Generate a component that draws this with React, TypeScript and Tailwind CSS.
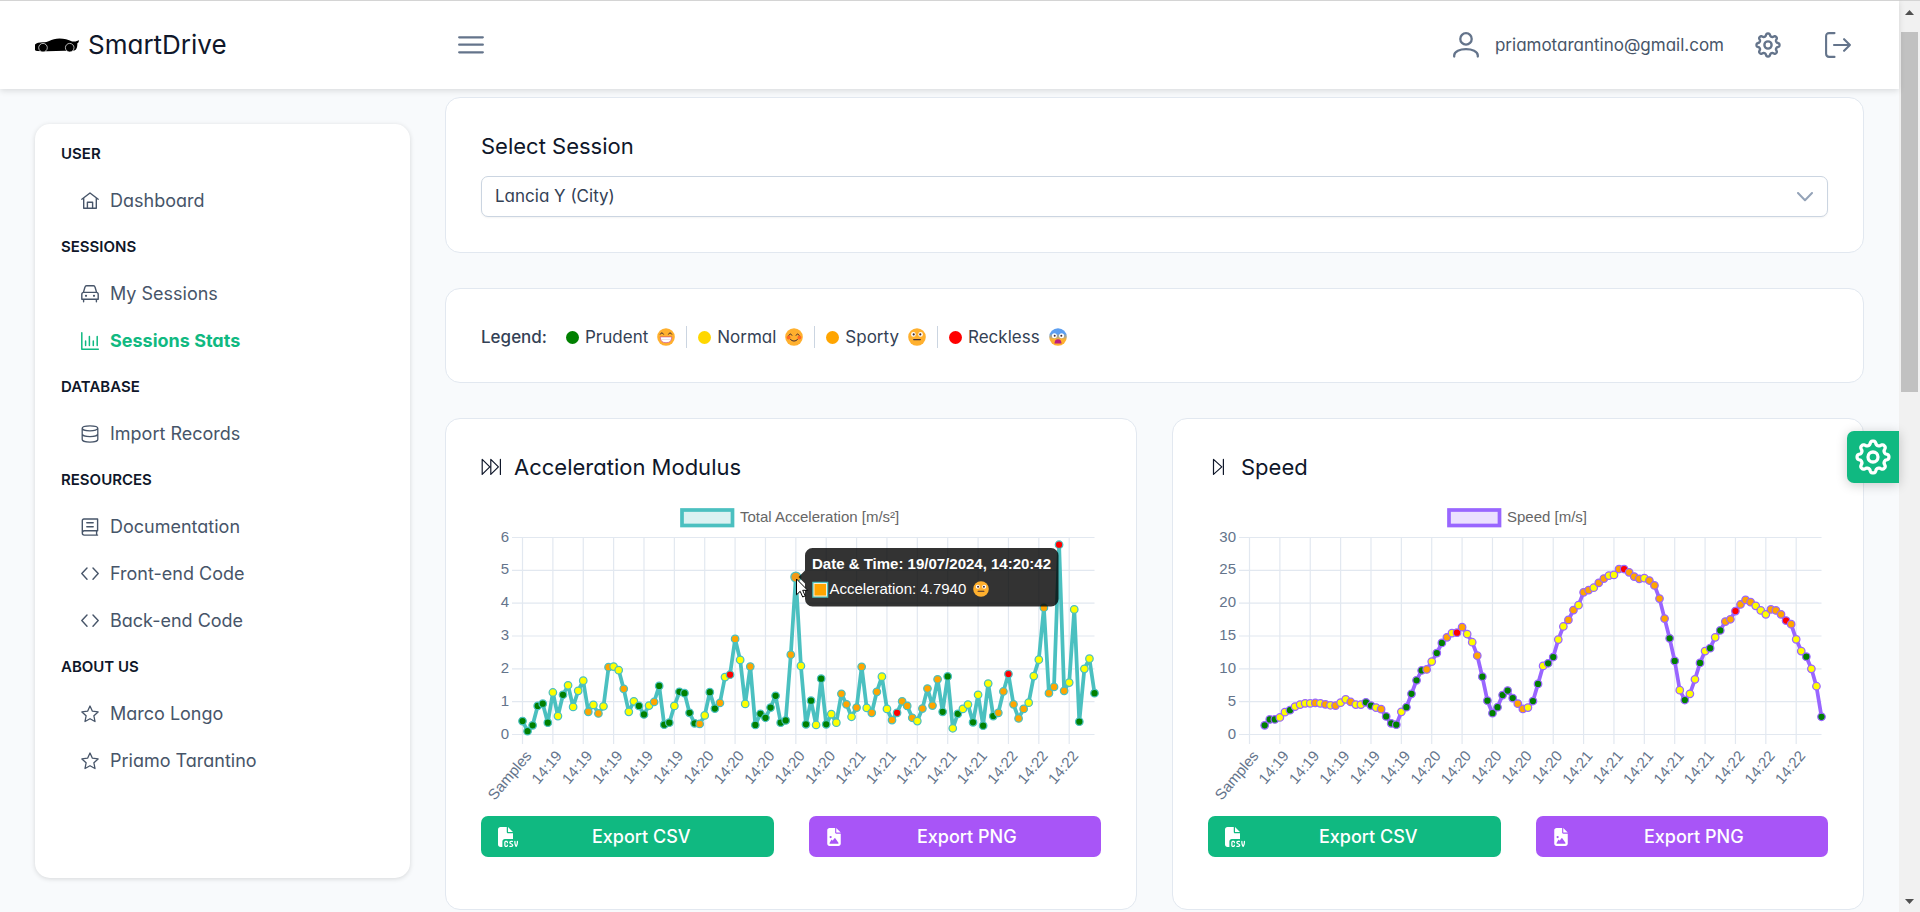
import { useId, type ReactNode } from "react";
import { FaFileCsv, FaFileImage } from "react-icons/fa6";

type Level = "G" | "Y" | "O" | "R";

const pointColor: Record<Level, string> = {
  G: "#008000",
  Y: "#ffff00",
  O: "#ffa500",
  R: "#ff0000",
};

const LEVELS = [
  "GGGGGGYYGY",
  "YYYOYOYOYY",
  "OYYGGYOGGG",
  "YGGGGOYGGO",
  "YROYYOGGGG",
  "GGGOOYGGYG",
  "GYYOOYOOYO",
  "OYYOROOOYO",
  "OOOGGYGYYG",
  "YGYGOOROOO",
  "YYYOOOROYY",
  "GYYG",
].join("");

const ACCELERATION: number[] = [
  0.41, 0.1, 0.28, 0.87, 0.94, 0.36, 1.28, 0.56, 1.21, 1.5, 0.84, 1.33, 1.64, 0.69, 0.9, 0.64, 0.86, 2.05, 2.07, 1.96,
  1.39, 0.69, 1.01, 0.87, 0.61, 0.88, 0.99, 1.48, 0.3, 0.36, 0.87, 1.3, 1.26, 0.66, 0.34, 0.32, 0.58, 1.29, 0.79, 0.96,
  1.75, 1.82, 2.91, 2.27, 0.93, 2.07, 0.29, 0.63, 0.51, 0.82, 1.18, 0.36, 0.43, 2.43, 4.794, 2.09, 0.31, 1.03, 0.29, 1.7,
  0.31, 0.62, 0.36, 1.24, 0.92, 0.54, 0.82, 2.06, 0.81, 0.66, 1.3, 1.76, 0.78, 0.44, 0.66, 1.01, 0.87, 0.51, 0.41, 0.79,
  1.4, 0.88, 1.68, 0.69, 1.77, 0.19, 0.63, 0.78, 0.91, 0.37, 1.21, 0.27, 1.55, 0.56, 0.66, 1.31, 1.84, 0.92, 0.49, 0.78,
  0.97, 1.78, 2.28, 3.86, 1.26, 1.45, 5.78, 1.33, 1.58, 3.81, 0.39, 2.0, 2.31, 1.26,
];

// The first three samples carry no GPS fix, so the speed series starts at index 3.
const SPEED_START = 3;
const SPEED: number[] = [
  1.4, 2.3, 2.3, 2.6, 3.4, 3.7, 4.25, 4.55, 4.75, 4.75, 4.8, 4.75, 4.6, 4.45, 4.4, 4.85, 5.35, 4.95, 4.55, 4.55, 4.9,
  4.4, 4.1, 3.85, 2.75, 1.7, 1.5, 3.45, 4.15, 6.2, 8.25, 9.75, 9.9, 11.1, 12.4, 13.95, 14.8, 15.45, 15.5, 16.35, 15.3,
  14.05, 12, 8.8, 5.15, 3.25, 4.15, 6, 6.7, 5.55, 4.7, 3.9, 4.1, 5.1, 7.7, 10.45, 10.85, 11.8, 14.45, 16.45, 17.45,
  18.95, 19.7, 21.65, 22, 22.35, 23.1, 23.75, 24.2, 24.3, 25.2, 25.2, 24.7, 24.05, 23.7, 23.8, 23.45, 22.7, 20.7, 17.65,
  14.65, 11.2, 6.75, 5.25, 6.2, 8.4, 10.9, 12.7, 13.15, 14.8, 15.85, 17.2, 17.55, 18.8, 19.8, 20.5, 20.15, 19.6, 18.9,
  18.3, 19.05, 18.9, 18.3, 17.35, 16.8, 14.5, 12.7, 11.85, 10, 7.35, 2.7,
];

const TIME_LABELS = [
  "Samples", "14:19", "14:19", "14:19", "14:19", "14:19", "14:20", "14:20", "14:20", "14:20",
  "14:20", "14:21", "14:21", "14:21", "14:21", "14:21", "14:22", "14:22", "14:22",
];

/* ---------- icons ---------- */

function LineIcon({ children, className, width = 1.4 }: { children: ReactNode; className?: string; width?: number }) {
  return (
    <svg
      viewBox="0 0 18 18"
      className={className ?? "size-[18px] shrink-0"}
      fill="none"
      stroke="currentColor"
      strokeWidth={width}
      strokeLinecap="round"
      strokeLinejoin="round"
      aria-hidden="true"
    >
      {children}
    </svg>
  );
}

const HomeIcon = () => (
  <LineIcon>
    <path d="M.8 7.2 9 1l8.2 6.2M2.7 6v10.3h12.6V6M6.4 16.3v-6.1h5.2v6.1" />
  </LineIcon>
);
const CarIcon = () => (
  <LineIcon>
    <path d="M2.4 7.4 4 2q.3-1.200 1.500-1.200h7q1.200 0 1.500 1.200l1.600 5.400M.8 9.4q0-2 2-2h12.400q2 0 2 2v4.800H.8zM2.600 14.200v2.600M15.400 14.200v2.600" />
    <path d="M5 10.800h.01M13 10.800h.01" strokeWidth="2.200" />
  </LineIcon>
);
const ChartBarIcon = () => (
  <LineIcon width={1.5}>
    <path d="M.8.8v16.400h16.500M4.600 9v4.600M8.400 4.400v9.200M12.300 9v4.600M16.200 4.400v9.200" />
  </LineIcon>
);
const DatabaseIcon = () => (
  <LineIcon width={1.3}>
    <path d="M1.200 3.200C1.200 1.800 4.700.8 9 .8s7.800 1 7.800 2.400S13.300 5.800 9 5.800 1.200 4.600 1.200 3.200zM1.200 3.200v11.400c0 1.400 3.500 2.600 7.800 2.600s7.800-1.200 7.800-2.600V3.200M1.200 9c0 1.400 3.500 2.600 7.800 2.600s7.800-1.200 7.800-2.600" />
  </LineIcon>
);
const BookIcon = () => (
  <LineIcon>
    <path d="M16.600 12.800V1H3Q1.300 1 1.300 2.700v12.400q0 2 1.900 2h13.400M16 12.800H3.200q-1.900 0-1.900 2.200M15.600 12.800v4.300M5.800 4.800h6.400M5.800 8.700h6.400" />
  </LineIcon>
);
const CodeIcon = () => (
  <LineIcon>
    <path d="M6 3 .8 8.600 6 14.200M12 3l5.200 5.600-5.200 5.600" />
  </LineIcon>
);
const StarIcon = () => (
  <LineIcon width={1.3}>
    <path d="m9 1 2.400 5.200 5.700.7-4.200 3.900 1.100 5.700L9 13.700l-5 2.800 1.100-5.700L.9 6.900l5.700-.7z" />
  </LineIcon>
);

const gearPath = (() => {
  const points: string[] = [];
  const steps = 192;
  for (let i = 0; i < steps; i++) {
    const a = (i / steps) * Math.PI * 2;
    const r = 7.05 + 0.98 * Math.tanh(1.6 * Math.cos(8 * a));
    points.push(`${(9 + r * Math.sin(a)).toFixed(2)} ${(9 - r * Math.cos(a)).toFixed(2)}`);
  }
  return `M${points.join("L")}Z`;
})();

function CogIcon({ className }: { className: string }) {
  return (
    <LineIcon className={className} width={1.65}>
      <path d={gearPath} />
      <circle cx="9" cy="9" r="2.500" />
    </LineIcon>
  );
}

function CarLogo() {
  return (
    <svg viewBox="0 0 44 15" className="h-[15px] w-11 shrink-0" aria-hidden="true">
      <path
        fill="#000"
        d="M0 6.500C1.500 4.800 4 4.300 8 4.200c2.500 0 4.500-.3 6.200-1.200C17 1.300 20.500.4 24.500.4c4.600 0 8.800 1.200 12.600 3.200l3.400-.2 3.700-1.200-.8 2.200-1.200 1c.4 1.800 0 4.200-1.200 6.200l-1.600 1L12 13.200 1.800 13 0 12.300z"
      />
      <g fill="#000" stroke="#fff" strokeWidth=".7">
        <circle cx="8" cy="9.700" r="4.300" />
        <circle cx="34.700" cy="9.700" r="4.300" />
      </g>
    </svg>
  );
}

const FastForwardIcon = () => (
  <LineIcon className="h-[18px] w-[22px]" width={1.2}>
    <path d="M-.8 1.400v15l7.600-7.500zM7.800 1.400v15l7.600-7.500zM17.400 1.400v15" />
  </LineIcon>
);
const StepForwardIcon = () => (
  <LineIcon className="h-[18px] w-[22px]" width={1.2}>
    <path d="M3.500 1.400v15l8.300-7.500zM13.400 1.400v15" />
  </LineIcon>
);

/* ---------- faces ---------- */

type Mood = "grin" | "smile" | "neutral" | "scared";

function FaceShapes({ mood }: { mood: Mood }) {
  const id = useId();
  return (
    <>
      {mood === "scared" && (
        <defs>
          <linearGradient id={id} x1="0" y1="0" x2="0" y2="1">
            <stop offset=".3" stopColor="#5c9ef0" />
            <stop offset=".65" stopColor="#ffb02e" />
          </linearGradient>
        </defs>
      )}
      <circle cx="9" cy="9" r="8.800" fill={mood === "scared" ? `url(#${id})` : "#ffb02e"} />
      {mood === "grin" && (
        <>
          <path d="M3.300 6.200q1.500-3 3.200 0M11.500 6.200q1.500-3 3.200 0" fill="none" stroke="#402a32" strokeLinecap="round" />
          <path d="M3.200 8.900h11.600q0 5.800-5.800 5.800T3.200 8.900z" fill="#fff" stroke="#bb1d80" strokeWidth=".5" />
          <path d="M4 11.500h10" stroke="#d8c2d0" strokeWidth=".5" />
        </>
      )}
      {mood === "smile" && (
        <>
          <circle cx="3.600" cy="9.500" r="1.900" fill="#ff6723" />
          <circle cx="14.400" cy="9.500" r="1.900" fill="#ff6723" />
          <path
            d="M3.900 7.300q1.500-2.900 3 0M11.100 7.300q1.500-2.900 3 0M5.500 11.500q3.500 3.400 7 0"
            fill="none"
            stroke="#402a32"
            strokeLinecap="round"
          />
        </>
      )}
      {mood === "neutral" && (
        <>
          <circle cx="5.400" cy="6.400" r="2.300" fill="#fff" />
          <circle cx="12.600" cy="6.400" r="2.300" fill="#fff" />
          <circle cx="5.700" cy="6.400" r="1.100" fill="#402a32" />
          <circle cx="12.300" cy="6.400" r="1.100" fill="#402a32" />
          <path d="M5.700 11.600h6.600" stroke="#402a32" strokeWidth="1.200" strokeLinecap="round" />
        </>
      )}
      {mood === "scared" && (
        <>
          <circle cx="5.400" cy="7.700" r="2.500" fill="#fff" />
          <circle cx="12.600" cy="7.700" r="2.500" fill="#fff" />
          <circle cx="5.700" cy="7.700" r="1" fill="#402a32" />
          <circle cx="12.300" cy="7.700" r="1" fill="#402a32" />
          <path d="M5.500 15.500q0-4.300 3.500-4.300t3.500 4.300z" fill="#bb1d80" />
        </>
      )}
    </>
  );
}

/* ---------- layout pieces ---------- */

function Header() {
  return (
    <header className="relative z-10 flex h-[89px] items-center border-t border-[#d4d4d4] bg-white pr-12 pl-[35px] shadow-[0_2px_6px_rgba(0,0,0,0.12)]">
      <div className="flex w-[423px] items-center gap-[9px]">
        <CarLogo />
        <span className="text-[26px] leading-8 text-[#0f172a]">SmartDrive</span>
      </div>
      <button type="button" aria-label="Toggle menu" className="text-[#64748b]">
        <svg viewBox="0 0 26 20" className="h-5 w-[26px]" stroke="currentColor" strokeWidth="2.300" strokeLinecap="round">
          <path d="M1.200 2.300h23.600M1.200 9.700h23.600M1.200 17.300h23.600" />
        </svg>
      </button>
      <div className="ml-auto flex items-center text-[#64748b]">
        <svg viewBox="0 0 26 26" className="size-[26px]" fill="none" stroke="currentColor" strokeWidth="2.300" strokeLinecap="round">
          <circle cx="13" cy="6.900" r="5.700" />
          <path d="M1.200 24.600v-1c0-8.600 23.600-8.600 23.600 0v1" />
        </svg>
        <span className="ml-4 text-[17px] leading-6 text-[#475569]">priamotarantino@gmail.com</span>
        <button type="button" aria-label="Settings" className="ml-[31px]">
          <CogIcon className="size-[26px]" />
        </button>
        <button type="button" aria-label="Sign out" className="ml-11">
          <svg
            viewBox="0 0 26 26"
            className="size-[26px]"
            fill="none"
            stroke="currentColor"
            strokeWidth="2.100"
            strokeLinecap="round"
            strokeLinejoin="round"
          >
            <path d="M9.500 1.100H4.200Q1.100 1.100 1.100 4.200v17.600q0 3.100 3.100 3.100h5.300M9 13h15.900M19.100 7.200 24.900 13l-5.800 5.800" />
          </svg>
        </button>
      </div>
    </header>
  );
}

const MENU: { title: string; items: { label: string; icon: ReactNode; active?: boolean }[] }[] = [
  { title: "USER", items: [{ label: "Dashboard", icon: <HomeIcon /> }] },
  {
    title: "SESSIONS",
    items: [
      { label: "My Sessions", icon: <CarIcon /> },
      { label: "Sessions Stats", icon: <ChartBarIcon />, active: true },
    ],
  },
  { title: "DATABASE", items: [{ label: "Import Records", icon: <DatabaseIcon /> }] },
  {
    title: "RESOURCES",
    items: [
      { label: "Documentation", icon: <BookIcon /> },
      { label: "Front-end Code", icon: <CodeIcon /> },
      { label: "Back-end Code", icon: <CodeIcon /> },
    ],
  },
  {
    title: "ABOUT US",
    items: [
      { label: "Marco Longo", icon: <StarIcon /> },
      { label: "Priamo Tarantino", icon: <StarIcon /> },
    ],
  },
];

function Sidebar() {
  return (
    <nav
      aria-label="Main"
      className="mt-[35px] h-[calc(100vh-158px)] w-[375px] shrink-0 rounded-[15px] bg-white px-[26px] pt-[7px] shadow-[0_1px_5px_rgba(0,0,0,0.14)]"
    >
      {MENU.map((group) => (
        <section key={group.title}>
          <h2 className="flex h-[46px] items-center text-[15px] font-semibold text-[#0f172a]">{group.title}</h2>
          <ul>
            {group.items.map((item) => (
              <li key={item.label}>
                <a
                  href="#"
                  className={
                    item.active
                      ? "flex h-[47px] items-center gap-[11px] pl-5 text-[18px] font-bold text-[#10b981]"
                      : "flex h-[47px] items-center gap-[11px] pl-5 text-[18px] text-[#475569]"
                  }
                >
                  {item.icon}
                  {item.label}
                </a>
              </li>
            ))}
          </ul>
        </section>
      ))}
    </nav>
  );
}

function LegendItem({ dot, label, mood }: { dot: string; label: string; mood: Mood }) {
  return (
    <li className="flex items-center px-[11px]">
      <svg viewBox="0 0 13 13" className="mr-1.5 size-[13px]" aria-hidden="true">
        <circle cx="6.500" cy="6.500" r="6.500" fill={dot} />
      </svg>
      {label}
      <svg viewBox="0 0 18 18" className="ml-[9px] size-[18px]" role="img" aria-label={mood}>
        <FaceShapes mood={mood} />
      </svg>
    </li>
  );
}

/* ---------- chart ---------- */

const X0 = 41.5;
const X1 = 613.5;
const Y_TOP = 37.5;
const Y_BOTTOM = 234.5;
const STEP = (X1 - X0) / 113;

function Chart(props: {
  name: string;
  legendX: number;
  values: number[];
  start?: number;
  max: number;
  tick: number;
  stroke: string;
  fill: string;
  highlight?: number;
  children?: ReactNode;
}) {
  const { name, legendX, values, start = 0, max, tick, stroke, fill, highlight, children } = props;
  const y = (v: number) => Y_BOTTOM - (v / max) * (Y_BOTTOM - Y_TOP);
  const points = values.map((v, i) => ({ x: X0 + (i + start) * STEP, y: y(v), index: i + start }));
  const ticks = Array.from({ length: max / tick + 1 }, (_, i) => i * tick);
  return (
    <svg
      viewBox="0 0 620 306"
      role="img"
      aria-label={name}
      className="block w-full overflow-visible font-['Liberation_Sans',Arial,sans-serif] text-[15px]"
    >
      <rect x={legendX + 2} y="10" width="50.500" height="15.500" fill={fill} stroke={stroke} strokeWidth="3.700" />
      <text x={legendX + 60} y="22" fill="#666">
        {name}
      </text>
      <g stroke="#e2e8f0" strokeWidth="1.200">
        {ticks.map((t) => (
          <line key={t} x1="31" x2={X1} y1={y(t)} y2={y(t)} />
        ))}
        {TIME_LABELS.map((_, i) => (
          <line key={i} x1={X0 + i * 6 * STEP} x2={X0 + i * 6 * STEP} y1={Y_TOP} y2="244" />
        ))}
      </g>
      <g fill="#64748b" textAnchor="end">
        {ticks.map((t) => (
          <text key={t} x="28" y={y(t) + 4}>
            {t}
          </text>
        ))}
        {TIME_LABELS.map((label, i) => (
          <text key={i} dy="5" transform={`translate(${X0 + i * 6 * STEP + 6} 253) rotate(-50)`}>
            {label}
          </text>
        ))}
      </g>
      <polyline
        points={points.map((p) => `${p.x.toFixed(1)},${p.y.toFixed(1)}`).join(" ")}
        fill="none"
        stroke={stroke}
        strokeWidth="3.750"
        strokeLinejoin="round"
      />
      <g stroke={stroke} strokeWidth="1.250">
        {points.map((p) => (
          <circle
            key={p.index}
            cx={p.x}
            cy={p.y}
            r={p.index === highlight ? 5 : 3.75}
            fill={p.index === highlight ? "#ef9a1a" : pointColor[LEVELS[p.index] as Level]}
          />
        ))}
      </g>
      {children}
    </svg>
  );
}

function AccelerationTooltip() {
  return (
    <g>
      <path
        d="M331.500 48h238.500a7.500 7.500 0 0 1 7.500 7.500v43.500a7.500 7.500 0 0 1-7.500 7.500H331.500a7.500 7.500 0 0 1-7.500-7.500V83.500L317.500 77l6.500-6.500v-15a7.500 7.500 0 0 1 7.500-7.500z"
        fill="#000"
        fillOpacity=".8"
      />
      <text x="331" y="69" fill="#fff" fontWeight="700">
        Date &amp; Time: 19/07/2024, 14:20:42
      </text>
      <rect x="332" y="82.500" width="14.500" height="14.500" fill="#ffa500" stroke="#4bc0c0" strokeWidth="1.500" />
      <rect x="333" y="83.500" width="12.500" height="12.500" fill="none" stroke="#fff" strokeOpacity=".8" />
      <text x="348.500" y="94" fill="#fff">
        Acceleration: 4.7940
      </text>
      <svg x="492" y="81" width="16" height="16" viewBox="0 0 18 18">
        <FaceShapes mood="neutral" />
      </svg>
      <path
        d="M315.500 79v15.800l3.700-3.500 2.500 5.700 2.500-1.100-2.500-5.600h5z"
        fill="#fff"
        stroke="#000"
        strokeWidth="1"
      />
    </g>
  );
}

function ChartCard({ icon, title, children }: { icon: ReactNode; title: string; children: ReactNode }) {
  return (
    <section className="min-w-0 flex-1 rounded-[15px] border border-[#e2e8f0] bg-white px-[35px] pt-[34px] pb-[52px]">
      <h2 className="flex h-7 items-center gap-[11px] text-[22px] text-[#0f172a]">
        {icon}
        {title}
      </h2>
      <div className="mt-[19px]">{children}</div>
      <div className="mt-[10px] grid grid-cols-2 gap-[35px]">
        <button type="button" className="flex h-[41px] items-center gap-2 rounded-[7px] bg-[#10b981] px-[17px] text-[18px] font-medium text-white">
          <FaFileCsv className="size-5" />
          <span className="flex-1">Export CSV</span>
        </button>
        <button type="button" className="flex h-[41px] items-center gap-2 rounded-[7px] bg-[#a855f7] px-[17px] text-[18px] font-medium text-white">
          <FaFileImage className="h-[18px] w-4" />
          <span className="flex-1">Export PNG</span>
        </button>
      </div>
    </section>
  );
}

function Scrollbar() {
  return (
    <div aria-hidden="true" className="flex w-[21px] shrink-0 flex-col items-center border-t border-[#d4d4d4] bg-[#f1f1f1]">
      <svg viewBox="0 0 21 31" className="h-[31px] w-full">
        <path d="M6 14 10.500 9l4.500 5z" fill="#505050" />
      </svg>
      <div className="h-[360px] w-[17px] bg-[#c1c1c1]" />
      <svg viewBox="0 0 21 21" className="mt-auto h-[21px] w-full">
        <path d="M6 8h9l-4.500 5z" fill="#505050" />
      </svg>
    </div>
  );
}

export default function App() {
  return (
    <div className="flex min-h-screen bg-[#f8fafc] font-[Inter,sans-serif] text-[#475569] [font-feature-settings:'cv02','cv03','cv04','cv11']">
      <div className="relative min-w-0 flex-1">
        <Header />
        <div className="flex items-start gap-[35px] px-[35px]">
          <Sidebar />
          <main className="flex min-w-0 flex-1 flex-col gap-[35px] pt-2">
            <section className="rounded-[15px] border border-[#e2e8f0] bg-white px-[35px] pt-[34px] pb-[35px]">
              <label htmlFor="session" className="block text-[22px] leading-7 text-[#0f172a]">
                Select Session
              </label>
              <div className="relative mt-4">
                <select
                  id="session"
                  className="block h-[41px] w-full appearance-none rounded-[7px] border border-[#cbd5e1] bg-white px-[13px] text-[17px] text-[#334155] shadow-[0_1px_2px_rgba(18,18,23,0.05)]"
                >
                  <option>Lancia Y (City)</option>
                </select>
                <svg
                  viewBox="0 0 16 10"
                  className="pointer-events-none absolute top-4 right-[15px] h-[10px] w-4"
                  fill="none"
                  stroke="#94a3b8"
                  strokeWidth="2"
                  strokeLinecap="round"
                  strokeLinejoin="round"
                  aria-hidden="true"
                >
                  <path d="m1 1 7 7.200L15 1" />
                </svg>
              </div>
            </section>

            <section className="flex items-center rounded-[15px] border border-[#e2e8f0] bg-white px-[35px] pt-[37px] pb-[34px] text-[17px] leading-[22px] text-[#334155]">
              <span className="mr-2 font-medium">Legend:</span>
              <ul className="flex divide-x divide-[#cbd5e1]">
                <LegendItem dot="#008000" label="Prudent" mood="grin" />
                <LegendItem dot="#ffd700" label="Normal" mood="smile" />
                <LegendItem dot="#ffa500" label="Sporty" mood="neutral" />
                <LegendItem dot="#ff0000" label="Reckless" mood="scared" />
              </ul>
            </section>

            <div className="flex gap-[35px]">
              <ChartCard icon={<FastForwardIcon />} title="Acceleration Modulus">
                <Chart
                  name="Total Acceleration [m/s²]"
                  legendX={199}
                  values={ACCELERATION}
                  max={6}
                  tick={1}
                  stroke="#4bc0c0"
                  fill="#dbf2f2"
                  highlight={54}
                >
                  <AccelerationTooltip />
                </Chart>
              </ChartCard>
              <ChartCard icon={<StepForwardIcon />} title="Speed">
                <Chart
                  name="Speed [m/s]"
                  legendX={239}
                  values={SPEED}
                  start={SPEED_START}
                  max={30}
                  tick={5}
                  stroke="#9966ff"
                  fill="#ebe0ff"
                />
              </ChartCard>
            </div>
          </main>
        </div>
        <button
          type="button"
          aria-label="Theme settings"
          className="absolute top-[431px] right-0 z-10 flex size-[52px] items-center justify-center rounded-l-[7px] bg-[#10b981] text-white shadow-[0_2px_12px_rgba(0,0,0,0.2)]"
        >
          <CogIcon className="size-9" />
        </button>
      </div>
      <Scrollbar />
    </div>
  );
}
